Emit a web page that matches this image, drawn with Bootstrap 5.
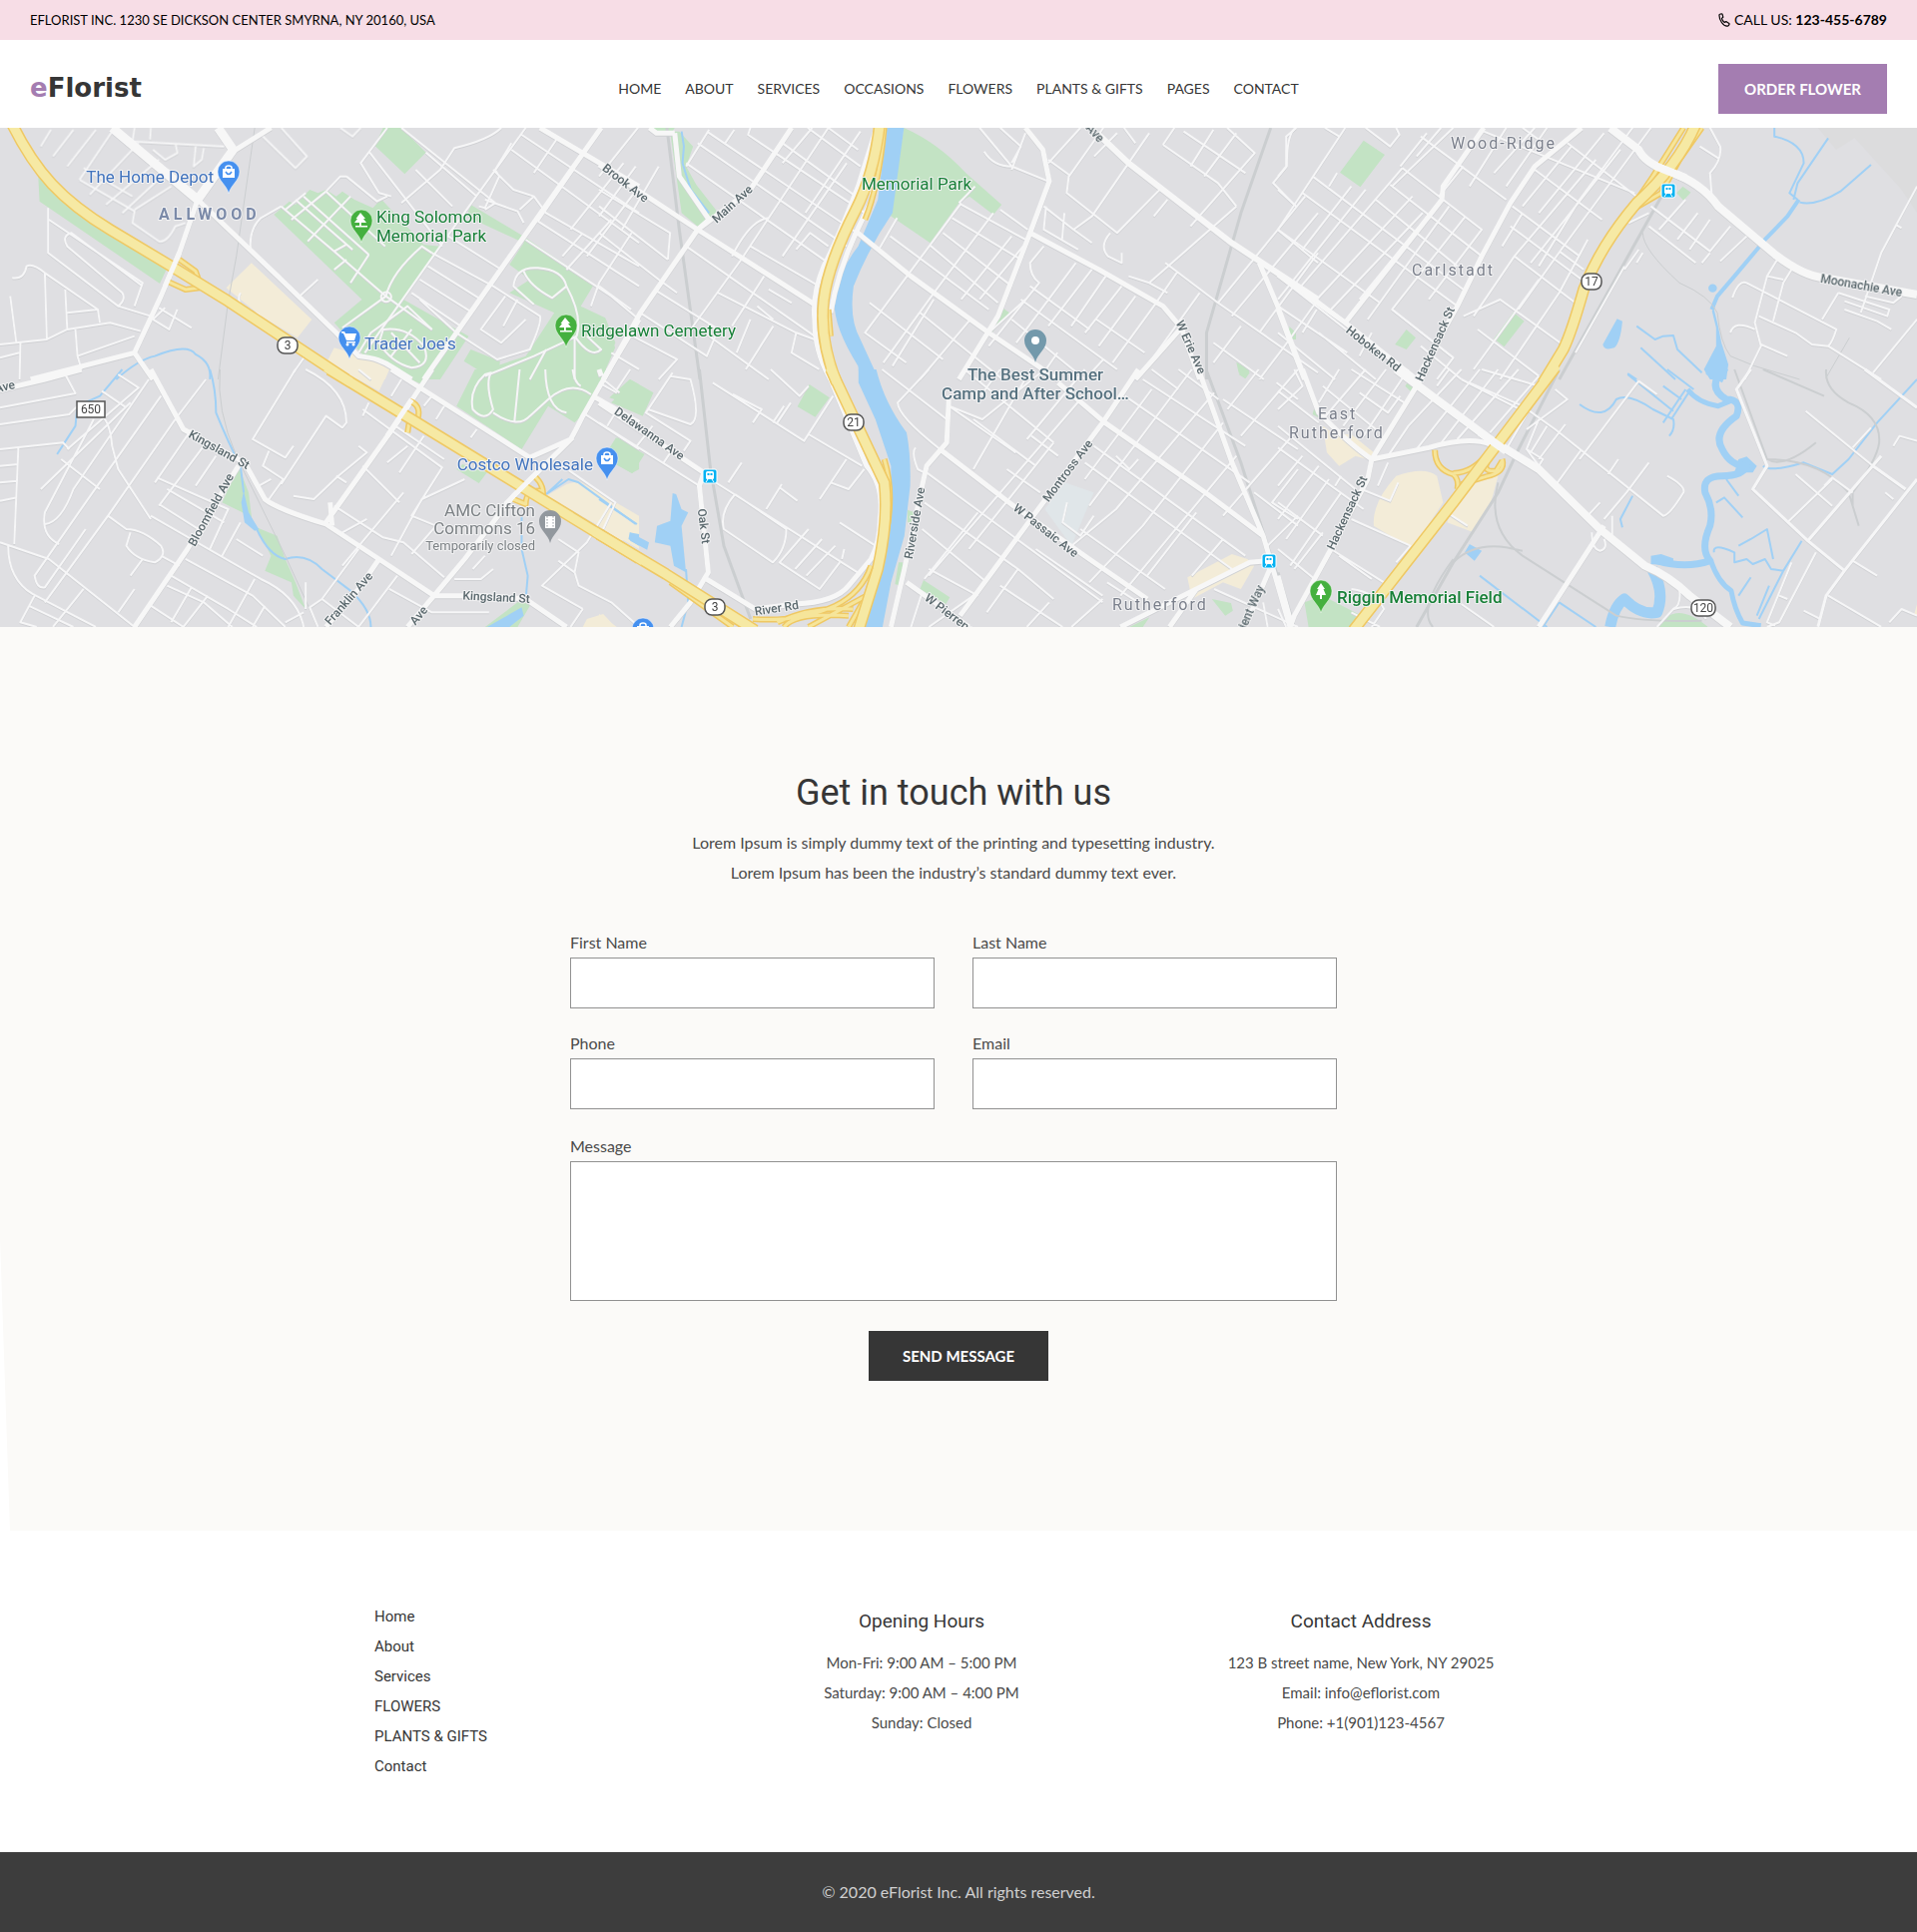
<!DOCTYPE html>
<html lang="en">
<head>
<meta charset="utf-8">
<meta name="viewport" content="width=device-width, initial-scale=1">
<title>Contact - eFlorist</title>
<link href="https://cdn.jsdelivr.net/npm/bootstrap@5.3.0/dist/css/bootstrap.min.css" rel="stylesheet">
<style>
  body { font-family: Lato, "Open Sans", sans-serif; font-size: 16px; line-height: 30px; color: #4a4a4a; background: #fff; }
  a { color: inherit; text-decoration: none; }
  .topbar { background: #f7dde6; color: #000; height: 40px; font-size: 13px; }
  .topbar, .site-head { padding-left: 30px; padding-right: 30px; }
  .topbar .call { font-size: 14px; }
  .site-head { height: 88px; padding-top: 10px; color: #363636; }
  .site-head .side { flex: 1 1 0; }
  .logo { font-family: "DejaVu Sans", sans-serif; font-weight: 700; font-size: 26px; }
  .logo span { color: #a47db1; }
  .menu { gap: 24px; font-size: 14px; }
  .btn-flat { height: 50px; border: 0; border-radius: 0; font-size: 15px; font-weight: 700; color: #fff; }
  .btn-order { width: 169px; background: #a47db1; }
  .btn-send { width: 180px; margin-top: 30px; background: #363636; }
  .btn-flat:hover { color: #fff; background: #555; }
  .narrow { font-family: "Liberation Sans Narrow", Roboto, sans-serif; font-weight: 400; color: #363636; }

  .map { display: block; width: 100%; height: 500px; background: #dfdfe2; }
  .tile-a { transform: scale(.4082, .3333); }
  .tile-b { transform: translate(600px, 0) scale(.4592, .3333); }
  .tile-c { transform: translate(1280px, 0) scale(.4082, .3333); }
  .tile-d { transform: translate(0, 370px) scale(.4082, .3333); }
  .tile-e { transform: translate(600px, 370px) scale(.4464, .3333); }
  .tile-f { transform: translate(1280px, 370px) scale(.4082, .3333); }
  .map path { vector-effect: non-scaling-stroke; stroke-linejoin: round; stroke-linecap: butt; }
  .park { fill: #c3e3c4; } .shop { fill: #f3ecd8; } .lake { fill: #a0d0f5; }
  .creek, .river, .rail, .rail2, .minor, .major, .wide, .case, .hwy, .ramp-case, .ramp { fill: none; }
  .creek { stroke: #a0d0f5; stroke-width: 2; }
  .river { stroke: #a0d0f5; stroke-width: 8; }
  .rail { stroke: #cbced0; stroke-width: 3; } .rail2 { stroke: #cbced0; stroke-width: 1; }
  .minor { stroke: #f6f6f7; stroke-width: 2; }
  .major { stroke: #f7f7f7; stroke-width: 5; } .wide { stroke: #f7f7f7; stroke-width: 8; }
  .w2 { stroke-width: 2; } .w3 { stroke-width: 3; } .w4 { stroke-width: 4; } .w5 { stroke-width: 5; }
  .w6 { stroke-width: 6; } .w7 { stroke-width: 7; } .w8 { stroke-width: 8; } .w9 { stroke-width: 9; } .w11 { stroke-width: 11; }
  .roads { filter: drop-shadow(0 1px 0 #cfd0d3); }
  .case { stroke: #efc863; stroke-width: 12; } .hwy { stroke: #f6e9a4; stroke-width: 9; }
  .ramp-case { stroke: #efc863; stroke-width: 6; } .ramp { stroke: #f6e59a; stroke-width: 3; }
  .map text { font-family: Roboto, sans-serif; font-size: 17px; paint-order: stroke; stroke: #f3f3f4; stroke-width: 2; stroke-linejoin: round; }
  .map .street { font-size: 12px; font-weight: 500; fill: #5a686d; text-anchor: middle; dominant-baseline: middle; }
  .map .town { font-size: 16px; letter-spacing: 2px; fill: #7a7f8b; }
  .map .town-main { font-weight: 700; letter-spacing: 4px; fill: #7b8aa8; }
  .map .shield { font-size: 12px; fill: #444; text-anchor: middle; stroke: none; }
  .map .note { font-size: 13px; }
  .blue { fill: #4173bd; } .pin-blue { fill: #4590ef; }
  .green { fill: #188038; } .pin-green { fill: #45b03f; }

  .touch { background: #fbfaf8; clip-path: polygon(0 0, 100% 0, 100% 100%, 10px 100%, 0 612px); padding: 141px 0 150px; }
  .form-shell { width: 100%; max-width: 778px; padding-right: 10px; margin: 0 auto; }
  .touch h1 { font-size: 36px; line-height: 50px; margin-bottom: 10px; }
  .field-row { --bs-gutter-x: 38px; }
  .field-row > div { margin-bottom: 20px; }
  .field-row > .col-12 { margin: 2px 0 0; }
  .touch label { display: block; line-height: 30px; }
  .touch .form-control { border: 1px solid #919191; border-radius: 0; background: #fff; }
  .touch input.form-control { height: 51px; }
  .touch textarea.form-control { height: 140px; resize: none; }

  .foot-cols { width: 100%; max-width: 1394px; padding-right: 74px; margin: 0 auto; font-size: 15px; }
  .foot-cols .links { padding-left: 112px; }
  .foot-cols h2 { font-size: 19px; line-height: 40px; margin-bottom: 6px; }
  .foot-main { padding: 71px 0; }
  .copy { background: #3d3d3d; color: #d0d0d0; height: 80px; }
</style>
</head>
<body>

<div class="topbar d-flex align-items-center justify-content-between">
  <span>EFLORIST INC. 1230 SE DICKSON CENTER SMYRNA, NY 20160, USA</span>
  <a class="call d-flex align-items-center gap-1" href="#">
    <svg width="12" height="14" viewBox="0 0 12 14" fill="none" stroke="#000" stroke-width="1.2" stroke-linejoin="round" aria-hidden="true"><path d="M1 1.8C1 1 3.6.6 4 1.2L4.8 4.200L3.400 5.400C3.800 7 4.800 8.600 6.200 9.400L7.800 8.600L10.800 10.400C11.600 11.200 10 13 9 13.200C5 13.400.6 7 1 1.800Z"/></svg>
    <span>CALL US: <b>123-455-6789</b></span>
  </a>
</div>

<header class="site-head d-flex align-items-center">
  <div class="side"><a class="logo" href="#"><span>e</span>Florist</a></div>
  <nav class="menu d-flex">
    <a href="#">HOME</a><a href="#">ABOUT</a><a href="#">SERVICES</a><a href="#">OCCASIONS</a><a href="#">FLOWERS</a><a href="#">PLANTS &amp; GIFTS</a><a href="#">PAGES</a><a href="#">CONTACT</a>
  </nav>
  <div class="side d-flex justify-content-end"><button class="btn btn-flat btn-order" type="button">ORDER FLOWER</button></div>
</header>

<svg class="map" viewBox="0 128 1920 500" preserveAspectRatio="xMidYMid slice" role="img" aria-label="Map of Rutherford and surroundings">
  <defs>
    <path id="pin" d="M0 33C-2 24-11 20-11 11A11 11 0 1 1 11 11C11 20 2 24 0 33Z"/>
    <g id="bag"><path fill="#fff" d="M-6 7H6V16H-6Z"/><path fill="none" stroke="#fff" stroke-width="1.500" d="M-3 8V6Q-3 4 0 4Q3 4 3 6V8"/><path fill="none" stroke="#4590ef" stroke-width="1.500" d="M-3 10Q0 15 3 10"/></g>
    <g id="tree"><path fill="#fff" d="M-1 3L4 9H2L5 13H-.200V16H6V17.500H-6V16H-2V13H-7L-4 9H-5.500Z"/></g>
    <g id="train"><rect x="-7" y="-7" width="14" height="14" rx="2" fill="#04b2f2" stroke="#fff"/><rect x="-4" y="-5" width="8" height="8" rx="1.500" fill="#fff"/><path fill="#04b2f2" d="M-2.500-3H-.500V-1H-2.500ZM.500-3H2.500V-1H.500Z"/><path stroke="#fff" d="M-2 3L-4 6M2 3L4 6"/></g>
  </defs>

  <!-- parks -->
  <g class="park">
    <path class="tile-a" d="M93 510L97 605L392 852L412 800L270 690L150 600ZM940 384H985L1045 458L993 523L920 438ZM672 645L710 605L725 615L760 570L780 580L800 570L825 590L840 575L870 600L915 625L935 598L1040 735L1080 740L990 900L1150 1010L1080 1140H1030L950 1090L900 1080L820 970L888 900ZM1155 615L1285 710L1457 855L1425 920L1485 955L1510 1030L1470 1140H1210L1180 1115L1290 1070L1360 940L1250 880L1300 840L1250 795L1285 730L1145 650ZM1155 1050L1227 1085L1225 1105L1180 1117L1138 1085Z"/>
    <path class="tile-b" d="M665 384Q740 430 800 520L878 615L860 645L808 590L785 610L722 730L632 645ZM155 395H175L205 440L190 500L212 555L260 640L215 680L180 640ZM880 925L895 940L857 1000L860 975ZM1505 980L1520 1000V1020H1512ZM1390 1088L1420 1110L1410 1137L1395 1120ZM115 384H165L160 395H130ZM0 950L15 960L35 1045L5 1140H0Z"/>
    <path class="tile-c" d="M210 422L262 465L202 562L152 518ZM578 938L604 965L555 1042L530 1018ZM315 990L338 1015L315 1050L287 1035ZM993 560L1013 578L995 602L978 580ZM25 985L43 1000V1020H35Z"/>
    <path class="tile-d" d="M955 0H1065L1035 45ZM1165 0H1490L1455 80L1430 135L1410 160L1345 110L1280 240L1120 110ZM1545 30L1568 45V115L1495 85ZM1515 205L1568 240V300L1550 312L1490 270ZM1195 310L1175 342L1120 300L1135 285ZM585 290L610 370L620 470L680 500L700 570L725 640L750 720L720 680L715 640L650 605L665 560L640 500L595 430L545 400ZM1270 700H1305L1270 774H1190Z"/>
    <path class="tile-e" d="M70 30L122 70L98 140L27 100L50 70ZM38 205L102 255L75 312L10 265ZM472 45L517 85L485 143L445 112ZM692 422L708 430L700 460H692ZM672 580H682L676 650L664 645ZM728 633L787 685L778 705L720 660ZM1375 690L1418 702L1422 725L1405 740ZM1235 745L1220 774H1190ZM1450 0L1460 10L1450 28L1435 15ZM0 0H15L0 30Z"/>
    <path class="tile-f" d="M320 35L335 45L325 65L312 50ZM65 700L110 680L205 740L190 774H75ZM930 774Q975 690 1055 774ZM88 120L100 130V145L85 135Z"/>
  </g>
  <path fill="#dcdcdd" class="tile-c" d="M1325 384H1568V640L1530 570L1415 415L1370 450Z"/>
  <path fill="#e0e6e9" class="tile-e" d="M1045 340L1110 370L1060 530L1000 420Z"/>

  <!-- commercial areas -->
  <g class="shop">
    <path class="tile-a" d="M617 790L765 960L730 1015L640 950L555 865ZM820 1045L905 1075L955 1110L945 1140H870L803 1085Z"/>
    <path class="tile-d" d="M835 0H955L930 65ZM1390 345L1420 335L1568 440V540L1470 470L1340 380ZM1430 774L1440 750L1480 735L1510 774Z"/>
    <path class="tile-e" d="M0 385L90 460L85 510L40 515L0 470ZM1320 625L1420 555L1455 570L1470 590L1440 660L1400 640L1330 690ZM0 735L40 774H0Z"/>
    <path class="tile-f" d="M290 320Q360 290 390 320L405 400L330 540L235 470Q230 400 290 320ZM540 320L520 410L480 490L415 460L450 340ZM110 170L140 195H180L235 250L220 270L190 260L150 290L120 250ZM1560 740L1568 705V742Z"/>
  </g>

  <!-- water -->
  <g class="lake">
    <path class="tile-b" d="M628 384H665L640 640Q590 740 555 860Q545 960 570 1020L610 1140H568L565 1100Q510 980 513 900Q520 820 565 740L608 600Z"/>
    <path class="tile-e" d="M582 0H622Q640 100 690 190Q700 260 698 350L685 500L655 640L636 774H590L640 570L655 400V290L620 150L582 40ZM165 372L173 375L185 420L200 430L185 470L195 610L168 590L160 530L125 520L130 470L160 455ZM70 490L112 520L108 542L70 515Z"/>
    <path class="tile-c" d="M1080 888L1065 935L1075 985V1040L1045 1110L1060 1140H1100L1105 1095L1088 1030L1080 980L1070 930ZM832 958L845 965Q840 1030 825 1045Q800 1055 797 1035ZM1056 866A10 12 0 1 1 1077 866A10 12 0 1 1 1056 866Z"/>
    <path class="tile-d" d="M598 365L610 430L635 480L625 485L600 460L592 400ZM1280 715L1285 740L1250 774H1195ZM1545 490L1568 495V530L1542 510Z"/>
    <path class="tile-f" d="M1050 0H1105L1090 40L1050 15ZM1150 262L1175 290L1165 310H1120L1130 270ZM470 525L500 545L482 575L458 550ZM915 560L940 555L970 568V590L915 585Z"/>
  </g>
  <g class="creek">
    <path class="tile-a" d="M285 1140Q340 1080 380 1070Q460 1030 480 1065Q520 1090 515 1140"/>
    <path class="tile-b" d="M180 395L185 440L182 490L200 570L240 640"/>
    <path class="tile-c" d="M1218 384V410Q1290 430 1290 490L1255 580L1275 600M1350 415L1275 550L1265 600M1455 495L1380 575Q1320 620 1280 608M880 980L925 1020L945 1010L970 1008L980 1050L1040 1120M890 1045L975 1140M858 1122L880 1140"/>
    <path class="tile-d" d="M515 0Q530 60 530 130Q560 220 590 290L598 370M630 480Q660 560 700 570Q750 550 790 600L860 665Q910 720 910 774M300 0L245 80L190 110L185 170L140 255M1280 440V540L1295 620L1290 690M1340 375L1380 330M1340 375L1395 330L1420 340L1560 465"/>
    <path class="tile-e" d="M195 600L200 700L185 774M0 390L85 465"/>
    <path class="tile-f" d="M740 105Q800 160 830 90Q860 70 920 120L970 150Q975 180 960 200M858 15L970 125M1000 60L945 160M1010 65L965 150M955 0L1020 60M945 50L990 90M1190 290Q1210 310 1290 280L1360 315L1400 270L1470 160L1568 30M870 380L840 450L845 475M1100 330L1130 380M1075 400L1095 385L1140 445M1070 550Q1065 520 1120 550L1120 580L1150 570L1165 585L1195 570L1210 600L1240 605L1285 515M1130 530L1160 510L1200 480L1215 570M1240 605L1180 750M1160 625L1130 680M1205 650L1175 740M495 620L660 774M690 700L650 774M690 700L780 774"/>
  </g>
  <g class="river">
    <path class="tile-c w4" d="M1278 600L1250 650L1195 720L1175 750L1120 830L1078 890L1064 930"/>
    <path class="tile-f w7" d="M1080 20Q1060 60 1100 90Q1140 90 1125 140Q1065 190 1090 240Q1110 290 1150 290Q1140 320 1090 320Q1040 320 1048 370Q1070 420 1060 470Q1035 540 1060 575Q1000 600 930 575"/>
    <path class="tile-f w5" d="M1062 575Q1080 640 1112 665Q1120 720 1140 762L1185 770M1005 60Q1030 100 1080 110L1120 90"/>
    <path class="tile-f w11" d="M918 600Q950 670 930 730Q890 740 850 690Q825 710 815 774"/>
  </g>

  <!-- railways -->
  <g class="rail">
    <path class="tile-b" d="M148 384L175 690L220 1140M1465 384L1400 640L1350 880L1325 1000V1140"/>
    <path class="tile-c" d="M950 570L690 1140"/>
    <path class="tile-e" d="M225 0L250 300L280 530L340 750M1362 0L1440 280L1500 530L1560 774"/>
    <path class="tile-f" d="M690 0L590 240L540 370L430 580L340 774M0 610L40 774"/>
  </g>
  <g class="rail2">
    <path class="tile-a" d="M625 384L580 770L560 905L535 1140"/>
    <path class="tile-c" d="M895 700Q895 750 985 850Q1060 890 1078 940Q1085 1030 1110 1070L1170 1100L1280 1140M1345 1135L1402 1015"/>
    <path class="tile-d" d="M540 0Q530 120 580 260L700 560L780 774"/>
    <path class="tile-f w2" d="M540 340Q510 480 600 560L830 740Q900 760 1040 755M430 580Q480 520 560 535L600 545M430 570Q340 720 380 774M1190 0L1340 80M1345 0Q1340 60 1400 100Q1480 140 1475 220Q1470 270 1410 370V410M1120 0L1200 270Q1240 300 1320 220M1200 270Q1330 270 1400 370L1425 470"/>
  </g>

  <g class="roads">
    <g class="minor">
      <path class="tile-a" d="M100 440L125 390M130 470L180 390M165 500L235 390M195 540L275 395M195 540L330 635L325 670L390 725Q410 730 430 680L455 670M205 505L325 590M220 585L340 430M260 615L390 480M300 640L415 510M330 630L420 560M325 425L550 440M330 384L325 425M370 384L368 420M375 450L405 480L435 460L430 430M480 440L475 500L495 480L500 445M645 410L725 505L753 470L690 384M835 384L865 410L885 384"/>
      <path class="tile-a" d="M690 620L820 755L850 735M725 600L865 750M745 590L905 765M800 575L945 740M860 590L755 725M800 575L715 660M750 580L700 630M850 780L820 810M905 765L860 850M820 755L947 890L840 985M947 890Q960 820 1035 740L1060 760M947 890L1060 990M615 750Q610 690 640 655L690 620M935 892A12 14 0 1 1 960 892A12 14 0 1 1 935 892"/>
      <path class="tile-a" d="M950 384L885 490L930 580L960 590M905 455L1085 740M850 530L925 605L950 590M985 384L1215 610L1190 630M1290 384L1080 740L895 1060M1230 384Q1200 420 1115 445L1080 510L985 610M850 530L835 530L800 575M1255 430L1215 510L1225 530L1190 625L1175 620M1365 420L1310 520M1410 505L1320 665M1530 490L1400 690M1568 560L1440 770M1045 458L1170 590M1020 510L1110 620M1280 405L1568 640M1255 450L1568 730M1210 510L1260 570L1310 590L1340 640L1568 800M1190 600L1270 635L1285 670M1310 590L1275 630M1320 665L1568 860M1290 720L1500 890L1568 960M1060 760L1210 860L1325 950Q1330 970 1300 1050L1220 1080L1120 1000L1030 900M1100 710L1230 810M1050 800L1180 900M1030 840L1160 940M1010 880L1130 980M1270 900L1235 980M1240 890L1180 990L1230 1030L1290 960M1500 660L1390 810M1430 700L1380 770M1550 700L1470 850L1450 920"/>
      <path class="tile-a" d="M1310 915L1260 860Q1265 800 1320 805Q1380 810 1390 860L1355 895Q1300 860 1285 815M1390 860Q1430 950 1415 1010L1310 1070L1190 1130M1340 1050L1300 1140M1410 1010V1140M1410 1010Q1450 1080 1475 1050L1440 1010M940 990Q1000 980 1040 1040Q1060 1100 1010 1105Q960 1090 930 1030ZM960 1000L1030 1090M1010 990L960 1070M880 1060L910 1000L1000 920L1060 990"/>
      <path class="tile-a" d="M118 625V760L290 920Q310 900 300 880L165 740Q150 710 175 700L350 860M120 660L350 850L330 920M30 835Q60 840 65 800Q80 790 110 820L240 930L245 970M110 820L115 1020M160 870L165 990M165 940L240 930M0 1035L115 1020L165 990L270 970L345 995M185 990L190 1070L330 1010M25 890L40 1030M190 1070L200 1110M50 1030L48 1140M0 1075L48 1060M290 920L370 950M375 960L415 990L435 930M390 925L470 985M405 925L375 960M735 890L780 840M590 880Q580 900 595 925M615 940Q640 940 640 960M1500 1060L1568 1110M760 1050L720 1120M880 1110L910 1140"/>
      <path class="tile-b" d="M85 384L0 530M235 395L600 735M215 430L540 740M190 490L500 790M330 384L325 405L580 640M400 430L560 590M455 384L570 500M500 384L565 450M570 395L450 640M465 384L400 490M500 384L310 780M540 490L400 770M370 655Q330 660 290 770M240 390L190 500M295 390L275 430M190 740L470 1010M330 740L480 860M260 880L430 1000L470 1020M310 780L200 990M360 830L290 980M0 570L155 700L150 780M0 620L150 780M0 700L130 840M80 500L0 650M130 500L50 690M130 840L170 880M90 940L235 1070L260 990L120 870M60 1000L170 1080L130 1140M0 860L70 930M430 750L460 700L500 740M430 1000L420 1060L480 1110M345 920L380 960M370 870L420 910M230 1000L370 1140M330 960L300 1060M380 980L320 1110"/>
      <path class="tile-b" d="M650 655L610 750M635 710L850 930M790 610L580 1000L670 1090M720 735L870 910M750 700L900 860M770 655L920 780M790 615L930 720M860 640L720 900L620 1090M875 630L935 690M900 710L790 900M925 740L830 900M700 940L880 1140M820 560L785 610M730 900L640 1100M590 910L750 1080M810 960L700 1140M930 900L850 1000M840 455Q860 500 900 500L980 545M875 384L920 440L900 490M830 384L900 500M930 400L900 510M980 480L1025 525L1020 580L1130 700L1230 560M1025 530L1100 384M1050 384L980 490M1130 400L1080 470M1200 400L1075 650L1035 690L970 620M1035 690L1075 730M975 620L970 690L1045 750M1015 640L1010 720M1145 384L1170 430M1230 435L1255 384M1230 435L1350 550L1390 620M1340 390L1290 500M1390 400L1320 530M1370 384L1430 460L1290 680M1275 395L1410 520M1115 700Q1090 740 1110 770L1140 790V760M1155 830L1200 850L1240 880M1390 620L1200 850M1240 600L1210 650"/>
      <path class="tile-b" d="M970 740L940 790Q940 830 960 850L850 1040M1040 790L910 1030M1075 810L980 980M1105 830L1030 980M1140 860L1060 1000M1170 890L1090 1040M1210 920L1120 1090M940 860L1070 990M1085 960L1190 1060M920 900L1130 1110M900 960L1060 1140M1235 790L1350 910L1568 1120M1310 880L1190 1110M1260 820L1210 920M1540 590L1350 910M1568 640L1380 950M1568 760L1440 1000M1568 900L1490 1050L1440 1140M1480 690L1568 790M1520 384Q1500 400 1500 500L1470 550L1520 620M1340 1030L1450 1140M1400 980L1340 1090M1000 1060L960 1140M1100 1080L1060 1140"/>
      <path class="tile-c" d="M165 384L0 690M115 384L150 410M215 384L275 440L298 405L290 384M45 384L20 410V500L0 530M0 570L40 615M85 530L455 870M60 580L440 920M0 690L250 910M305 505L500 690L370 900M275 555L500 770M350 410L560 600M300 500L365 400M145 520L125 560M180 560L60 750M215 570L0 900M305 505L50 870M330 590L95 900L170 970M355 640L130 930M455 500L395 590M430 384L280 560M240 600L440 800M460 650L280 930L430 1075M340 690L200 900M420 620L220 960M505 395L875 580M600 384L640 420M630 510L795 660M710 430L890 600M575 620L740 770M570 680L745 840M580 770L735 915M690 755L750 810M550 740L600 640M915 384L695 750L590 930M870 384L740 600L640 800M840 450L620 790M660 384L560 560M800 400L640 640M780 480L580 770L480 950M720 440L600 620M630 384L530 520M760 720L690 880L545 1140M560 384L470 560M455 950L545 900L715 1050M490 990L640 1130M730 1060L850 800M640 840L480 1110M400 384L340 470"/>
      <path class="tile-c" d="M0 830L240 1060M0 920L170 1060M60 1000L95 930M100 1000L240 1140M280 930L430 1075L390 1140M200 1070L230 1000M0 1000L140 1140M350 1040L450 1140M915 620L1060 755L1110 680M935 690L1000 600M980 720L1030 640M1010 750L1060 660M910 680L1025 790M1040 790L1060 760M1085 785L1150 710M1060 384L1085 440Q1090 480 1060 520L1065 600M1035 440L1080 475M885 750L850 810M895 760L880 790M1225 780L1200 830L1170 970L1185 1040L1145 1140M1260 810L1240 850L1215 965M1200 830L1240 840M1115 895Q1130 840 1150 850L1370 990Q1360 1030 1350 1040L1310 1035L1270 1000L1180 950M1350 1040L1480 1140M1110 1000Q1120 960 1170 990M1185 1035L1250 1070M1568 560L1480 760L1430 940M1515 675L1530 685M1375 880L1500 930L1495 950L1390 905M1390 930L1470 965L1505 990M1440 890L1510 910L1530 890M1568 960L1460 1120M1335 960L1375 880M860 670L910 640"/>
      <path class="tile-d" d="M0 115L185 72L160 15M0 165L170 135L190 110M0 240L155 220L170 240M45 235L35 525M0 290L45 285M0 340L42 335M0 395L42 385M0 520L120 570L330 774M20 530Q20 630 80 675L235 774M85 680L50 760L90 774M70 710L180 774M150 270L245 360M250 140Q270 160 275 230L290 300L370 450M230 150L110 430Q100 500 145 525M250 65L310 115M290 15L340 55L165 240M365 30L180 360Q150 460 110 465M395 80L210 400L85 620Q90 660 110 655L210 480M430 150L265 440L110 700M470 180L380 340M505 30L430 150M320 100L100 360M500 230L390 410M530 260L480 350M385 325L560 420L515 540M410 360L550 460M390 405L500 490M370 440L640 630Q730 680 745 774M265 440L310 480Q350 480 395 530Q410 560 380 580Q330 570 310 530L320 490M395 560L440 590M590 460L545 560M580 510L645 560M455 570L620 680L700 774M420 620L560 720L630 774M410 650L500 700L570 774M370 710L450 774M470 655L420 760M510 680L450 774M625 630L560 774M650 710L620 774M700 760L745 730M750 720V640M330 660L290 730M350 570L320 620M205 660L130 774"/>
      <path class="tile-d" d="M750 0Q850 60 850 160L840 175L800 140L690 345M725 0L620 210L700 265L720 230M660 245L645 290L695 330L660 390M635 350L665 330M880 230L900 250L830 320L770 390L720 380M890 290L980 400M820 410L940 505L990 520L1090 625M850 340L825 320M990 370L840 590M890 120L1085 295L1010 440L1070 470L1010 555M1140 330L1035 390L960 560M905 100L890 140M900 450L840 490M970 170L1090 270M1000 230L950 280M1040 200L980 310M880 540L790 690L760 715L780 774M790 690L880 774M975 620L880 774M955 660L1060 730H1200M1115 630H1180L1210 600M1190 560L1160 600M1170 180L1155 205M985 30L960 80M1060 80L1040 110M1090 110L1070 150M1370 510L1420 550L1410 610M1370 575L1410 610L1420 650L1500 700L1568 774M1500 400L1440 520L1330 650L1430 720M1380 290L1510 400L1480 480M1430 720L1400 774M1430 130L1568 240M1510 130L1490 170M1480 30L1520 70"/>
      <path class="tile-d" d="M1190 15Q1150 60 1160 120Q1190 160 1210 120Q1190 40 1205 10ZM1210 130Q1270 180 1300 140L1345 90Q1400 30 1450 75M1275 0L1262 160M1338 0Q1340 120 1390 130M1405 0Q1410 40 1425 50"/>
      <path class="tile-e" d="M165 10L105 130L205 215L190 245M110 120L205 165Q230 150 205 30L160 20M0 160L225 350M120 170L85 230M160 250L145 280M255 40L460 215L525 80M385 0L450 80L470 50M345 160L365 120L300 75M415 110L390 160M430 100L400 160M470 195L590 290M555 270L495 390M520 340L560 360L595 300M250 330L580 610M410 345L375 420M405 355L445 395M320 280L290 340M305 375L420 480Q420 540 390 580L280 480Q270 430 305 375M470 480L405 580L495 660L540 580M500 510L440 600M530 530L465 620M540 460L620 530M550 540L545 570M0 40L40 70M70 0L40 60"/>
      <path class="tile-e" d="M635 0L780 150M740 0L670 100Q670 140 765 240M785 110L935 250M735 310L1130 700M730 400L940 600L1020 690M725 480L870 640M740 600L850 680M915 300L990 370M820 0L1020 220M840 150L980 290M970 200L1030 260M1090 280L1420 600M1110 230L1450 560M1160 260L1190 300L1210 270M1180 80L1460 340M1220 30L1450 230M1300 0L1390 90M1080 480L1270 660M980 540L1130 680M1240 0L1300 60M900 0L850 90M960 20L840 300M1080 90L740 620M1000 0L860 150L785 110M1020 220L830 540M850 430L730 630M1240 60L1090 330M1330 0L1100 410M1380 70L1160 420L1060 530M1400 160L1220 470L1100 640M1430 260L1170 680M1340 430L1230 620M1400 510L1330 620M1090 0L960 210M1568 180L1400 440M1568 300L1510 400L1568 450M1400 90L1568 240M1410 120L1480 0M1470 370L1568 470M1500 530L1568 440M1568 0L1440 200M1520 40L1568 90M725 670L700 774M840 680L740 774M1010 700L960 774M940 600L870 730M1130 690L1060 774M900 650L1040 774M1210 700L1140 640M1380 660L1568 774M1490 700L1500 774M710 235Q700 250 715 300L730 310M1050 400L1040 460L1080 500L1110 440"/>
      <path class="tile-f" d="M0 65L100 160M0 235L210 420M0 170L190 360M0 400L110 500M0 540L90 630M60 260L0 350M100 290L0 450M125 330L20 510M155 370L30 590M155 320L140 350M110 490L40 600M215 0L110 150M265 0L160 170M320 0L210 200M200 70L270 130L300 80M110 50L240 180M150 0L100 100M180 0L310 100M0 120L60 50L40 0M420 0L390 50M450 0L320 170L270 260M540 0L395 230M495 0L340 240M590 0L440 210M640 20L520 190M450 30L610 130M500 0L640 50M470 40L600 110L680 180L945 440Q960 440 995 370Q1000 350 955 320M660 30L560 240L570 250M640 150L610 240L640 290L650 270L610 240M660 170L620 250M705 165L640 270M680 60L710 90L610 180M745 240L680 350M885 35L740 270M885 35L930 75M835 270L810 315M910 280L855 370L800 450M820 440V500M790 400L760 440M770 490Q770 540 790 545Q810 540 800 510M180 450L325 530L290 580M205 360L275 395L295 340M270 280L245 350M130 540L260 640M150 560L230 630M180 660Q240 670 260 720L230 774M450 705L530 774M180 730L250 774M985 660Q990 710 970 720L930 774M0 720L20 774M415 430L465 470"/>
      <path class="tile-f w3" d="M1160 0L1125 60L1200 290L1165 360L1300 515L1390 605L1345 680L1325 774M1440 0L1568 115M1460 290L1540 360M1480 260L1300 515M1568 330L1390 605"/>
      <path class="tile-f" d="M1295 125L1460 290M1455 175L1410 235M1510 230L1525 200L1568 215M1270 315L1360 410M1360 330L1250 460M1340 350L1360 325L1410 370M1320 550L1230 760L1200 774M1260 580L1200 760L1220 770M1230 680L1250 690M1410 575L1470 620M1350 680L1480 774M1290 725L1330 750M1490 370L1510 390M1500 760L1530 720L1568 740M970 720Q1030 700 1050 750"/>
    </g>
    <g class="major">
      <path class="tile-a" d="M485 600L690 840L825 1000L880 1070C920 1075 940 1085 965 1105L1010 1140M485 600L440 760L395 890L330 1060L75 1140M665 384L572 455M330 1060L375 1140M1325 384L1568 560M1475 384L1240 790L1040 1140M1568 960L1480 1140"/>
      <path class="tile-b" d="M605 384Q590 450 565 560Q520 720 490 800Q465 880 470 960Q470 1060 505 1140M600 480L595 600L560 700Q520 820 505 940M0 495L215 690L470 915M420 384L330 570L215 690L90 940L10 1140M165 400L175 530L240 660L215 690M110 384L125 400H165M560 695L680 830L850 1000L1000 1140M930 384L968 450L982 545L940 700L870 950L785 1140M940 700L1090 810L1230 920L1270 985L1170 1140M1440 790L1480 920L1540 1140M1270 985L1310 1140"/>
      <path class="tile-c" d="M505 384L405 560L402 600L165 970M745 384L630 500L570 610L500 770L440 920L340 1140M0 825L165 970L340 1140M0 930L65 1140"/>
      <path class="tile-d" d="M370 0L450 180L600 280L650 390Q680 420 800 465L930 570L1065 680H1190L1290 690L1390 774M585 290L460 540L330 774M0 62L110 30L200 0M1060 0L980 150L800 460M810 400L815 470M960 0L1300 265L1400 210Q1410 190 1430 140L1495 0M1405 205L1260 380L1140 570L1065 680L1000 774M930 570L880 660L800 774M1455 80L1568 160"/>
      <path class="tile-e" d="M0 100L235 310L225 350L245 610L205 700L160 774M235 625L350 720L440 705Q530 700 560 650L610 570Q630 520 630 450Q640 350 600 290L510 0M785 80L780 220L735 290L725 350L685 600L655 774M765 240L930 410L1100 570L1230 690M690 640L830 774M1210 0L1130 160L980 430L810 740M1030 40L1135 160L1360 370L1490 500M1345 0L1420 280L1490 500L1510 590L1550 774M1170 774L1340 660L1460 580L1500 575M1340 660L1280 774M1505 600L1460 740M0 0L5 20"/>
      <path class="tile-f" d="M230 270L370 235Q470 200 520 225M60 0L100 130Q180 230 230 270L220 330L130 540L40 740L30 774M230 270L345 40L365 0M800 470L640 774M0 620L35 774"/>
    </g>
    <g class="wide">
      <path class="tile-a w9" d="M275 384L485 600M535 384L572 450L485 600"/>
      <path class="tile-b w6" d="M1090 405L1155 490L1380 730L1568 900"/>
      <path class="tile-c" d="M815 384L885 450Q900 490 960 515Q1040 550 1080 620L1220 765Q1290 830 1340 835L1568 885"/>
      <path class="tile-f" d="M290 0L520 210L640 300L790 480L900 590Q960 620 1010 680L1110 774"/>
    </g>
  </g>

  <!-- highways -->
  <g class="ramp-case">
    <path class="tile-a" d="M440 780L480 815L490 850M410 845L455 870L490 865"/>
    <path class="tile-b" d="M622 384Q610 560 580 660M500 930L505 1010"/>
    <path class="tile-c" d="M1040 384L985 480L940 580L870 630M995 384L920 530L870 620"/>
    <path class="tile-d" d="M1005 95Q1040 110 1020 165M1000 190L1005 150M1310 320Q1340 350 1330 395M1330 365Q1290 360 1290 405L1260 390"/>
    <path class="tile-e" d="M345 750Q450 760 530 710Q590 670 610 590M415 774Q440 730 560 740M470 774L600 680M160 640L300 774M400 760Q480 710 570 720M640 270Q665 380 640 520L600 680L560 774"/>
    <path class="tile-f" d="M385 242Q385 300 430 315Q445 330 440 360M430 312Q480 310 515 250M550 270Q560 310 510 322L450 345M520 265Q495 310 535 305L550 275"/>
  </g>
  <g class="ramp">
    <path class="tile-a" d="M440 780L480 815L490 850M410 845L455 870L490 865"/>
    <path class="tile-b" d="M622 384Q610 560 580 660M500 930L505 1010"/>
    <path class="tile-c" d="M1040 384L985 480L940 580L870 630M995 384L920 530L870 620"/>
    <path class="tile-d" d="M1005 95Q1040 110 1020 165M1000 190L1005 150M1310 320Q1340 350 1330 395M1330 365Q1290 360 1290 405L1260 390"/>
    <path class="tile-e" d="M345 750Q450 760 530 710Q590 670 610 590M415 774Q440 730 560 740M470 774L600 680M160 640L300 774M400 760Q480 710 570 720M640 270Q665 380 640 520L600 680L560 774"/>
    <path class="tile-f" d="M385 242Q385 300 430 315Q445 330 440 360M430 312Q480 310 515 250M550 270Q560 310 510 322L450 345M520 265Q495 310 535 305L550 275"/>
  </g>
  <g class="case">
    <path class="tile-a" d="M30 374C90 520 150 600 270 690L420 800L560 905L850 1140"/>
    <path class="tile-b" d="M612 374Q600 520 560 630Q500 790 490 900Q480 1020 518 1150"/>
    <path class="tile-c" d="M1025 374Q980 500 880 610Q790 740 750 870Q720 1000 700 1050L650 1150"/>
    <path class="tile-d" d="M808 0L1010 150L1290 360L1568 568"/>
    <path class="tile-e" d="M0 495L150 615L350 784M520 0L640 340Q650 450 625 600L582 784"/>
    <path class="tile-f" d="M680-5L430 400L185 784"/>
  </g>
  <g class="hwy">
    <path class="tile-a" d="M30 374C90 520 150 600 270 690L420 800L560 905L860 1148"/>
    <path class="tile-b" d="M612 374Q600 520 560 630Q500 790 490 900Q480 1020 518 1150"/>
    <path class="tile-c" d="M1025 374Q980 500 880 610Q790 740 750 870Q720 1000 700 1050L650 1150"/>
    <path class="tile-d" d="M800-6L1010 150L1290 360L1578 576"/>
    <path class="tile-e" d="M-10 487L150 615L350 784M518-6L640 340Q650 450 625 600L582 784"/>
    <path class="tile-f" d="M684-12L430 400L185 784"/>
  </g>
  <!-- overpasses -->
  <g class="major">
    <path class="tile-a" d="M440 760L405 860"/>
    <path class="tile-d" d="M1010 90L950 200M1330 295L1240 405"/>
    <path class="tile-c w8" d="M925 498L1000 535"/>
    <path class="tile-f w8" d="M495 188L560 245"/>
  </g>

  <!-- street names -->
  <g>
    <text class="street" transform="translate(626 184) rotate(38)">Brook Ave</text>
    <text class="street" transform="translate(734 205) rotate(-42)">Main Ave</text>
    <text class="street" transform="translate(1096 134) rotate(48)">Ave</text>
    <text class="street" transform="translate(1192 348) rotate(66)">W Erie Ave</text>
    <text class="street" transform="translate(1070 472) rotate(-53)">Montross Ave</text>
    <text class="street" transform="translate(1047 532) rotate(38)">W Passaic Ave</text>
    <text class="street" transform="translate(917 524) rotate(-80)">Riverside Ave</text>
    <text class="street" transform="translate(955 619) rotate(37)">W Pierrepont</text>
    <text class="street" transform="translate(704 527) rotate(83)">Oak St</text>
    <text class="street" transform="translate(778 610) rotate(-9)">River Rd</text>
    <text class="street" transform="translate(650 435) rotate(35)">Delawanna Ave</text>
    <text class="street" transform="translate(219 451) rotate(29)">Kingsland St</text>
    <text class="street" transform="translate(212 511) rotate(-61)">Bloomfield Ave</text>
    <text class="street" transform="translate(350 600) rotate(-49)">Franklin Ave</text>
    <text class="street" transform="translate(420 617) rotate(-50)">Ave</text>
    <text class="street" transform="translate(497 599) rotate(3)">Kingsland St</text>
    <text class="street" transform="translate(5 388) rotate(-12)">Ave</text>
    <text class="street" transform="translate(1375 350) rotate(38)">Hoboken Rd</text>
    <text class="street" transform="translate(1438 345) rotate(-66)">Hackensack St</text>
    <text class="street" transform="translate(1350 514) rotate(-65)">Hackensack St</text>
    <text class="street" transform="translate(1864 287) rotate(10)">Moonachie Ave</text>
    <text class="street" transform="translate(1252 614) rotate(-66)">Orient Way</text>
  </g>

  <!-- towns -->
  <text class="town town-main" x="159" y="220">ALLWOOD</text>
  <text class="town" x="1453" y="149">Wood-Ridge</text>
  <text class="town" x="1414" y="276">Carlstadt</text>
  <text class="town" x="1320" y="420">East</text>
  <text class="town" x="1291" y="439">Rutherford</text>
  <text class="town" x="1114" y="611">Rutherford</text>

  <!-- route shields -->
  <g fill="#fff" stroke="#555" stroke-width="1.500">
    <rect x="278" y="338" width="20" height="16" rx="7"/><rect x="706" y="600" width="20" height="16" rx="7"/><rect x="845" y="415" width="20" height="16" rx="7"/><rect x="1584" y="274" width="20" height="16" rx="7"/><rect x="1694" y="601" width="24" height="16" rx="7"/><rect x="77" y="402" width="28" height="16"/>
  </g>
  <text class="shield" x="288" y="350">3</text><text class="shield" x="716" y="612">3</text><text class="shield" x="855" y="427">21</text><text class="shield" x="1594" y="286">17</text><text class="shield" x="1706" y="613">120</text><text class="shield" x="91" y="414">650</text>
  <use href="#train" x="1671" y="191"/><use href="#train" x="711" y="477"/><use href="#train" x="1271" y="562"/>

  <!-- places -->
  <g class="blue">
    <text x="214" y="183" text-anchor="end">The Home Depot</text>
    <text x="365" y="350">Trader Joe's</text>
    <text x="594" y="471" text-anchor="end">Costco Wholesale</text>
  </g>
  <g class="green">
    <text x="377" y="223">King Solomon</text><text x="377" y="242">Memorial Park</text>
    <text x="582" y="337">Ridgelawn Cemetery</text>
    <text x="863" y="190">Memorial Park</text>
    <text x="1339" y="604" font-weight="500">Riggin Memorial Field</text>
  </g>
  <g fill="#56717f" font-weight="500" text-anchor="middle"><text x="1037" y="381">The Best Summer</text><text x="1037" y="400">Camp and After School…</text></g>
  <g fill="#7b8084" text-anchor="end"><text x="536" y="517">AMC Clifton</text><text x="536" y="535">Commons 16</text><text class="note" x="536" y="551">Temporarily closed</text></g>
  <g class="pin-blue" stroke="#fff" stroke-width=".5">
    <use href="#pin" x="229" y="161"/><use href="#pin" x="350" y="327"/><use href="#pin" x="608" y="448"/><use href="#pin" x="644" y="619"/>
  </g>
  <use href="#bag" x="229" y="162"/><use href="#bag" x="608" y="449"/><use href="#bag" x="644" y="620"/>
  <path fill="#fff" d="M342 332h3l1 2h11l-2 7h-8l-3-7-2-.500ZM347 342h9v1.500h-9Z"/><circle cx="348" cy="345" r="1.500" fill="#fff"/><circle cx="354" cy="345" r="1.500" fill="#fff"/>
  <g class="pin-green" stroke="#fff" stroke-width=".5"><use href="#pin" x="362" y="210"/><use href="#pin" x="567" y="315"/><use href="#pin" x="1323" y="581"/></g>
  <use href="#tree" x="362" y="210"/><use href="#tree" x="567" y="315"/>
  <path fill="#fff" d="M1323 584L1327 590H1325.500L1328 596H1324V600H1322V596H1318L1320.500 590H1319Z"/>
  <use href="#pin" x="1037" y="330" fill="#7399ab"/><circle cx="1037" cy="341" r="4" fill="#fff"/>
  <use href="#pin" x="551" y="511" fill="#92989e"/><path fill="#fff" d="M546 517h10v12h-10Z"/><path stroke="#92989e" stroke-dasharray="1.500 1.500" d="M548 517V529M554 517V529"/>
</svg>

<main class="touch">
  <div class="form-shell">
    <div class="text-center">
      <h1 class="narrow">Get in touch with us</h1>
      <p class="mb-0">Lorem Ipsum is simply dummy text of the printing and typesetting industry.<br>Lorem Ipsum has been the industry’s standard dummy text ever.</p>
    </div>
    <form id="contact" class="pt-4 mt-3">
      <div class="row field-row">
        <div class="col-sm-6"><label for="first">First Name</label><input class="form-control" id="first" type="text"></div>
        <div class="col-sm-6"><label for="last">Last Name</label><input class="form-control" id="last" type="text"></div>
        <div class="col-sm-6"><label for="phone">Phone</label><input class="form-control" id="phone" type="tel"></div>
        <div class="col-sm-6"><label for="email">Email</label><input class="form-control" id="email" type="email"></div>
        <div class="col-12"><label for="message">Message</label><textarea class="form-control" id="message"></textarea></div>
      </div>
    </form>
  </div>
  <div class="d-flex justify-content-center"><button class="btn btn-flat btn-send" type="submit" form="contact">SEND MESSAGE</button></div>
</main>

<footer>
  <div class="foot-main">
    <div class="foot-cols">
      <div class="row g-0">
        <nav class="links narrow col-md-4 d-flex flex-column">
          <a href="#">Home</a><a href="#">About</a><a href="#">Services</a><a href="#">FLOWERS</a><a href="#">PLANTS &amp; GIFTS</a><a href="#">Contact</a>
        </nav>
        <div class="col-md-4 text-center">
          <h2 class="narrow">Opening Hours</h2>
          <div>Mon-Fri: 9:00 AM – 5:00 PM</div><div>Saturday: 9:00 AM – 4:00 PM</div><div>Sunday: Closed</div>
        </div>
        <div class="col-md-4 text-center">
          <h2 class="narrow">Contact Address</h2>
          <div>123 B street name, New York, NY 29025</div><div>Email: info@eflorist.com</div><div>Phone: +1(901)123-4567</div>
        </div>
      </div>
    </div>
  </div>
  <div class="copy d-flex align-items-center justify-content-center">© 2020 eFlorist Inc. All rights reserved.</div>
</footer>
<script src="https://cdn.jsdelivr.net/npm/bootstrap@5.3.0/dist/js/bootstrap.bundle.min.js"></script>
</body>
</html>
